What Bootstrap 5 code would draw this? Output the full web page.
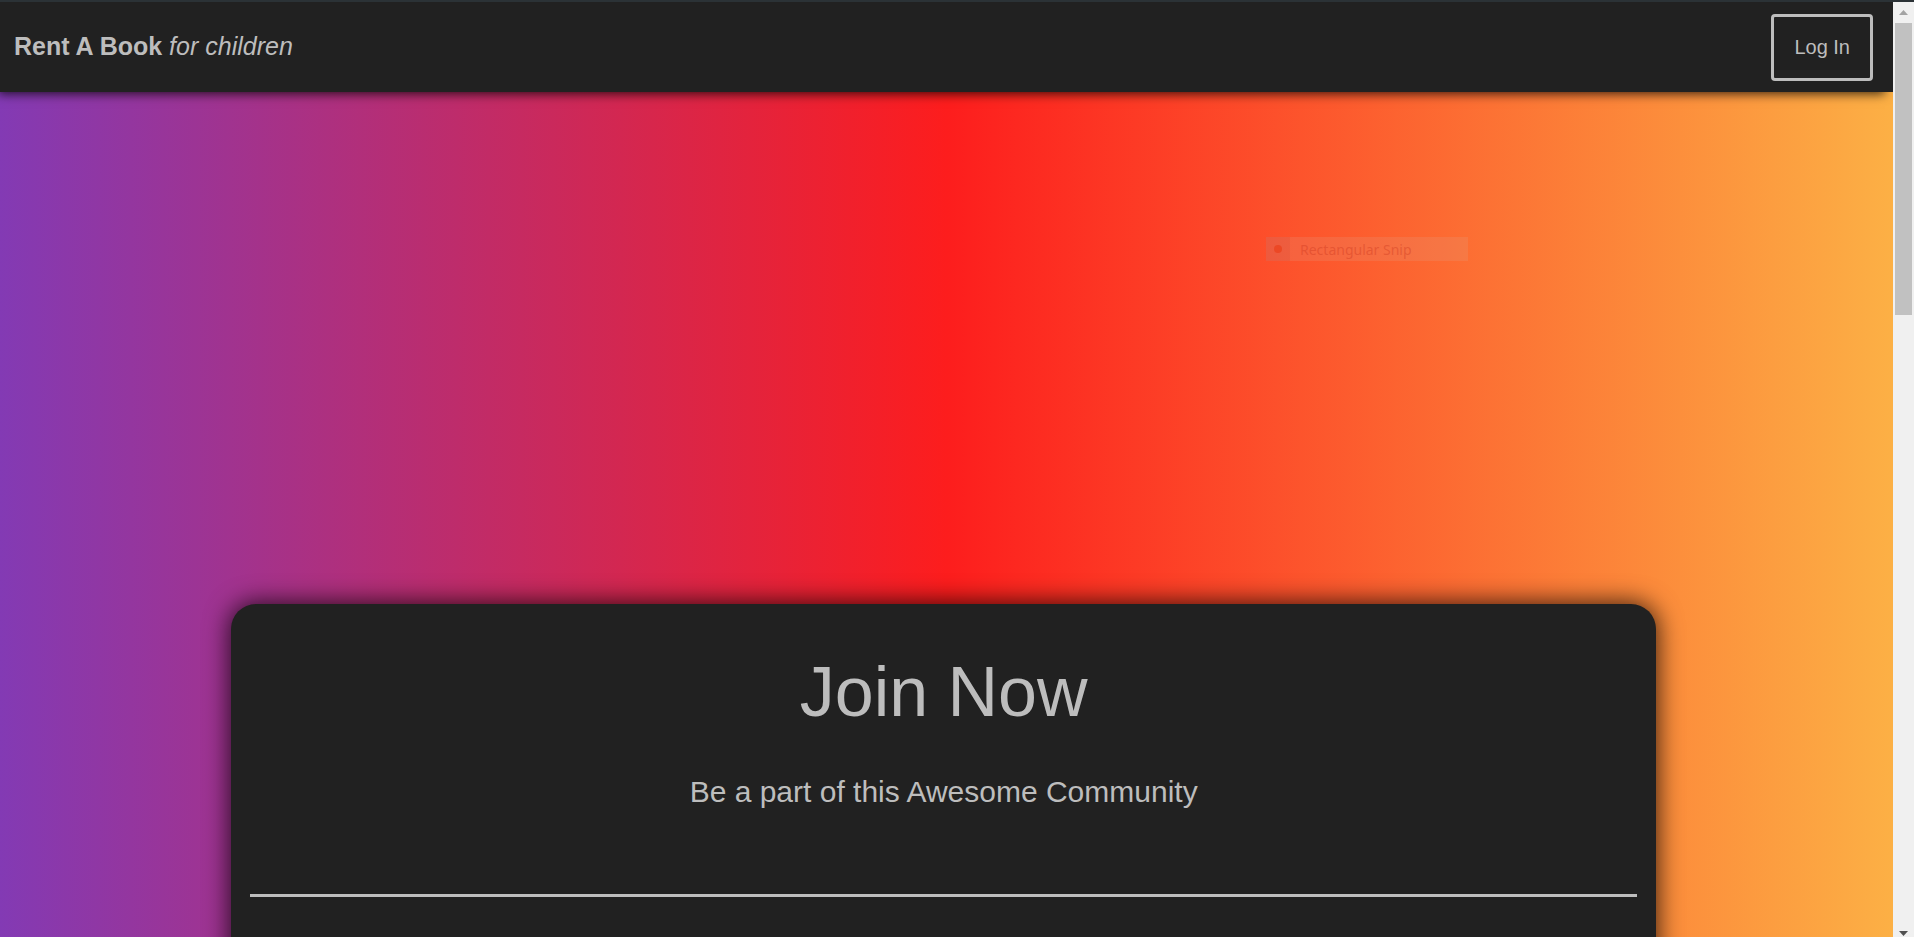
<!DOCTYPE html>
<html lang="en">
<head>
<meta charset="utf-8">
<meta name="viewport" content="width=device-width, initial-scale=1">
<title>Rent A Book for children</title>
<link href="https://cdn.jsdelivr.net/npm/bootstrap@5.3.0/dist/css/bootstrap.min.css" rel="stylesheet">
<style>
  body { font-family: "Liberation Sans", Arial, sans-serif; color: #bdbdbd; background: #212121; border-top: 2px solid #2b3236; }
  .page { background: linear-gradient(90deg, #833ab4 0%, #fd1d1d 50%, #fcb045 100%); }
  .topbar { background: #212121; height: 90px; padding: 0 20px 2px 14px; box-shadow: -5px 5px 10px -3px rgba(0, 0, 0, .75); }
  .topbar .navbar-brand { color: #bdbdbd; font-size: 25px; line-height: 30px; }
  .btn-login { --bs-btn-color: #bdbdbd; --bs-btn-border-color: #bdbdbd; --bs-btn-hover-color: #212121; --bs-btn-hover-bg: #bdbdbd;
    border-width: 3px; border-radius: 4px; font-size: 20px; line-height: 21px; padding: 20px; margin-top: 3px; }
  .join { background: #212121; margin: 512px 12.5% 0 12.2%; padding: 46px 19px 0; border-radius: 25px 25px 0 0; box-shadow: 0 0 25px 2px rgba(0, 0, 0, .75); }
  .join h1 { font-size: 70px; line-height: 84px; margin-bottom: 40px; font-weight: 400; }
  .join p { font-size: 30px; line-height: 36px; margin-bottom: 84px; }
  .join hr { border-top: 3px solid #bdbdbd; opacity: 1; margin: 0; }
  .snip { left: 1266px; top: 237px; width: 202px; height: 24px; background: rgba(220, 170, 150, .18); color: rgba(205, 55, 30, .4);
    font: 14px/25px "Noto Sans", "Open Sans", sans-serif; gap: 10px; }
  .snip-mark { width: 24px; height: 24px; background: rgba(190, 70, 70, .15); }
  .snip-dot { width: 8px; height: 8px; background: rgba(235, 65, 30, .75); }
  .scroller { width: 21px; background: #f0f0f0; }
  .scroller-thumb { width: 17px; height: 292px; background: #c1c1c1; }
  .scroller-arrow { height: 21px; }
</style>
</head>
<body class="vh-100 d-flex overflow-hidden">
  <div class="page flex-grow-1 overflow-hidden">
    <nav class="topbar navbar flex-nowrap justify-content-between position-relative">
      <a class="navbar-brand p-0 m-0" href="#"><strong>Rent A Book</strong> <em>for children</em></a>
      <button type="button" class="btn btn-login">Log In</button>
    </nav>
    <main class="d-flex flex-column">
      <section class="join text-center vh-100">
        <h1>Join Now</h1>
        <p>Be a part of this Awesome Community</p>
        <hr>
      </section>
    </main>
  </div>
  <div class="scroller flex-shrink-0 d-flex flex-column align-items-center" aria-hidden="true">
    <div class="scroller-arrow d-flex align-items-center">
      <svg width="9" height="5" viewBox="0 0 9 5"><path d="M0 5L4.500 0L9 5z" fill="#a3a3a3"/></svg>
    </div>
    <div class="scroller-thumb"></div>
    <svg class="mt-auto" width="9" height="6" viewBox="0 0 9 6"><path d="M0 0H9L4.500 5z" fill="#505050"/></svg>
  </div>
  <div class="snip position-absolute d-flex">
    <span class="snip-mark d-flex align-items-center justify-content-center"><span class="snip-dot rounded-circle"></span></span>
    <span>Rectangular Snip</span>
  </div>
  <script src="https://cdn.jsdelivr.net/npm/bootstrap@5.3.0/dist/js/bootstrap.bundle.min.js"></script>
</body>
</html>
